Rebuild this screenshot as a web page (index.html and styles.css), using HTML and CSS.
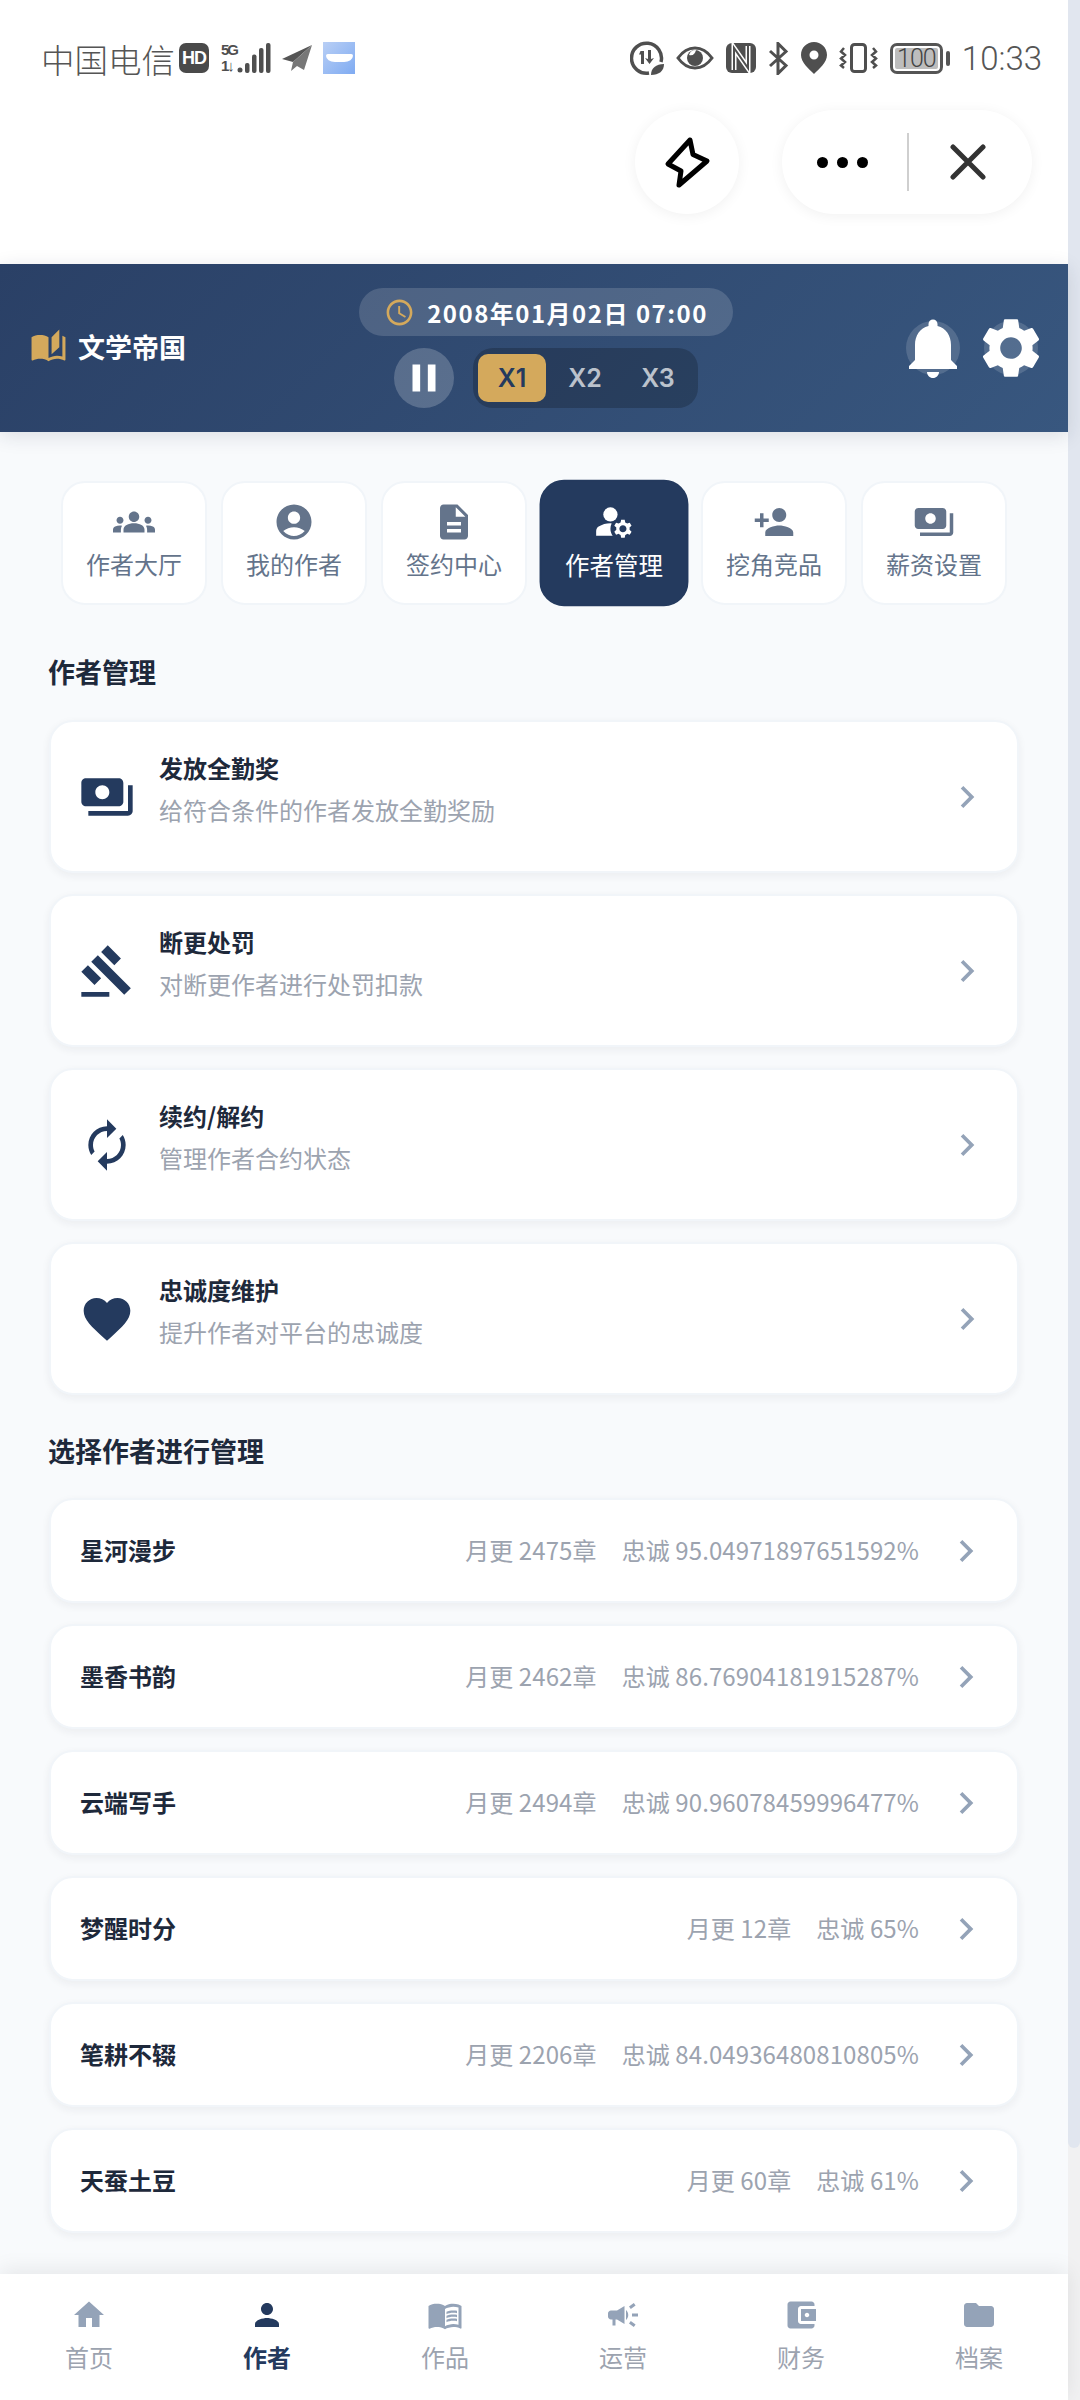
FILE: index.html
```html
<!DOCTYPE html>
<html lang="zh-CN">
  <head>
    <meta charset="UTF-8" />
    <meta name="viewport" content="width=device-width, initial-scale=1.0" />
    <title>文学帝国</title>
    <link rel="stylesheet" href="styles.css">
  </head>
  <body>
    <svg class="sprite" xmlns="http://www.w3.org/2000/svg">
      <symbol id="i-groups" viewBox="0 0 24 24"><path d="M12 12.75c1.63 0 3.07.39 4.24.9 1.08.48 1.76 1.56 1.76 2.73V18H6v-1.61c0-1.18.68-2.26 1.76-2.73 1.17-.52 2.61-.91 4.24-.91zM4 13c1.1 0 2-.9 2-2s-.9-2-2-2-2 .9-2 2 .9 2 2 2zm1.13 1.1c-.37-.06-.74-.1-1.13-.1-.99 0-1.93.21-2.78.58C.48 14.9 0 15.62 0 16.43V18h4.5v-1.61c0-.83.23-1.61.63-2.29zM20 13c1.1 0 2-.9 2-2s-.9-2-2-2-2 .9-2 2 .9 2 2 2zm4 3.43c0-.81-.48-1.53-1.22-1.85-.85-.37-1.79-.58-2.78-.58-.39 0-.76.04-1.13.1.4.68.63 1.46.63 2.29V18H24v-1.57zM12 6c1.66 0 3 1.34 3 3s-1.34 3-3 3-3-1.34-3-3 1.34-3 3-3z"/></symbol>
      <symbol id="i-account" viewBox="0 0 24 24"><path d="M12 2C6.48 2 2 6.48 2 12s4.48 10 10 10 10-4.48 10-10S17.52 2 12 2zm0 4c1.93 0 3.5 1.57 3.5 3.5S13.93 13 12 13s-3.5-1.57-3.5-3.5S10.07 6 12 6zm0 14c-2.03 0-4.43-.82-6.14-2.88C7.55 15.8 9.68 15 12 15s4.45.8 6.14 2.12C16.43 19.18 14.03 20 12 20z"/></symbol>
      <symbol id="i-doc" viewBox="0 0 24 24"><path d="M14 2H6c-1.1 0-1.99.9-1.99 2L4 20c0 1.1.89 2 1.99 2H18c1.1 0 2-.9 2-2V8l-6-6zm2 16H8v-2h8v2zm0-4H8v-2h8v2zm-3-5V3.5L18.5 9H13z"/></symbol>
      <symbol id="i-manage" viewBox="0 0 24 24"><circle cx="10" cy="8" r="4"/><path d="M10.67 13.02c-.22-.01-.44-.02-.67-.02-2.42 0-4.68.67-6.61 1.82-.88.52-1.39 1.5-1.39 2.53V20h9.26c-.79-1.13-1.26-2.51-1.26-4 0-1.07.25-2.07.67-2.98z"/><path d="M20.75 16c0-.22-.03-.42-.06-.63l1.14-1.01-1-1.73-1.45.49c-.32-.27-.68-.48-1.08-.63L18 11h-2l-.3 1.49c-.4.15-.76.36-1.08.63l-1.45-.49-1 1.73 1.14 1.01c-.03.21-.06.41-.06.63s.03.42.06.63l-1.14 1.01 1 1.73 1.45-.49c.32.27.68.48 1.08.63L16 21h2l.3-1.49c.4-.15.76-.36 1.08-.63l1.45.49 1-1.73-1.14-1.01c.03-.21.06-.41.06-.63zM17 18c-1.1 0-2-.9-2-2s.9-2 2-2 2 .9 2 2-.9 2-2 2z"/></symbol>
      <symbol id="i-personadd" viewBox="0 0 24 24"><path d="M15 12c2.21 0 4-1.79 4-4s-1.79-4-4-4-4 1.79-4 4 1.79 4 4 4zm-9-2V7H4v3H1v2h3v3h2v-3h3v-2H6zm9 4c-2.67 0-8 1.34-8 4v2h16v-2c0-2.66-5.33-4-8-4z"/></symbol>
      <symbol id="i-payments" viewBox="0 0 24 24"><path d="M19 14V6c0-1.1-.9-2-2-2H3c-1.1 0-2 .9-2 2v8c0 1.1.9 2 2 2h14c1.1 0 2-.9 2-2zm-9-1c-1.66 0-3-1.34-3-3s1.34-3 3-3 3 1.34 3 3-1.34 3-3 3zm13-6v11c0 1.1-.9 2-2 2H4v-2h17V7h2z"/></symbol>
      <symbol id="i-gavel" viewBox="0 0 24 24"><path d="M1 21h12v2H1v-2zM5.245 8.07l2.83-2.827 14.14 14.142-2.828 2.828L5.245 8.07zM12.317 1l5.657 5.656-2.83 2.83-5.654-5.66L12.317 1zM3.825 9.485l5.657 5.657-2.828 2.828-5.657-5.657 2.828-2.828z"/></symbol>
      <symbol id="i-renew" viewBox="0 0 24 24"><path d="M12 6v3l4-4-4-4v3c-4.42 0-8 3.58-8 8 0 1.57.46 3.03 1.24 4.26L6.7 14.8c-.45-.83-.7-1.79-.7-2.8 0-3.31 2.69-6 6-6zm6.76 1.74L17.3 9.2c.44.84.7 1.79.7 2.8 0 3.31-2.69 6-6 6v-3l-4 4 4 4v-3c4.42 0 8-3.58 8-8 0-1.57-.46-3.03-1.24-4.26z"/></symbol>
      <symbol id="i-heart" viewBox="0 0 24 24"><path d="M12 21.35l-1.45-1.32C5.4 15.36 2 12.28 2 8.5 2 5.42 4.42 3 7.5 3c1.74 0 3.41.81 4.5 2.09C13.09 3.81 14.76 3 16.5 3 19.58 3 22 5.42 22 8.5c0 3.78-3.4 6.86-8.55 11.54L12 21.35z"/></symbol>
      <symbol id="i-chevron" viewBox="0 0 24 24"><path d="M10 6L8.59 7.41 13.17 12l-4.58 4.59L10 18l6-6z"/></symbol>
      <symbol id="i-home" viewBox="0 0 24 24"><path d="M10 20v-6h4v6h5v-8h3L12 3 2 12h3v8z"/></symbol>
      <symbol id="i-person" viewBox="0 0 24 24"><path d="M12 12c2.21 0 4-1.79 4-4s-1.79-4-4-4-4 1.79-4 4 1.79 4 4 4zm0 2c-2.67 0-8 1.34-8 4v2h16v-2c0-2.66-5.33-4-8-4z"/></symbol>
      <symbol id="i-book" viewBox="0 0 24 24"><path d="M21 5c-1.11-.35-2.33-.5-3.5-.5-1.95 0-4.05.4-5.5 1.5-1.45-1.1-3.55-1.5-5.5-1.5S2.45 4.9 1 6v14.65c0 .25.25.5.5.5.1 0 .15-.05.25-.05C3.1 20.45 5.05 20 6.5 20c1.95 0 4.05.4 5.5 1.5 1.35-.85 3.8-1.5 5.5-1.5 1.65 0 3.35.3 4.75 1.05.1.05.15.05.25.05.25 0 .5-.25.5-.5V6c-.6-.45-1.25-.75-2-1zm0 13.5c-1.1-.35-2.3-.5-3.5-.5-1.7 0-4.15.65-5.5 1.5V8c1.35-.85 3.8-1.5 5.5-1.5 1.2 0 2.4.15 3.5.5v11.5z"/><path d="M17.5 10.5c.88 0 1.73.09 2.5.26V9.24c-.79-.15-1.64-.24-2.5-.24-1.7 0-3.24.29-4.5.83v1.66c1.13-.64 2.7-.99 4.5-.99zM13 12.49v1.66c1.13-.64 2.7-.99 4.5-.99.88 0 1.73.09 2.5.26V11.9c-.79-.15-1.64-.24-2.5-.24-1.7 0-3.24.3-4.5.83zM17.5 14.33c-1.7 0-3.24.29-4.5.83v1.66c1.13-.64 2.7-.99 4.5-.99.88 0 1.73.09 2.5.26v-1.52c-.79-.16-1.64-.24-2.5-.24z"/></symbol>
      <symbol id="i-campaign" viewBox="0 0 24 24"><path d="M18 11v2h4v-2h-4zm-2 6.61c.96.71 2.21 1.65 3.2 2.39.4-.53.8-1.07 1.2-1.6-.99-.74-2.24-1.68-3.2-2.4-.4.54-.8 1.08-1.2 1.61zM20.4 5.6c-.4-.53-.8-1.07-1.2-1.6-.99.74-2.24 1.68-3.2 2.4.4.53.8 1.07 1.2 1.6.96-.72 2.21-1.65 3.2-2.4zM4 9c-1.1 0-2 .9-2 2v2c0 1.1.9 2 2 2h1v4h2v-4h1l5 3V6L8 9H4zm11.5 3c0-1.33-.58-2.53-1.5-3.35v6.69c.92-.81 1.5-2.01 1.5-3.34z"/></symbol>
      <symbol id="i-wallet" viewBox="0 0 24 24"><path d="M21 18v1c0 1.1-.9 2-2 2H5c-1.11 0-2-.9-2-2V5c0-1.1.89-2 2-2h14c1.1 0 2 .9 2 2v1h-9c-1.11 0-2 .9-2 2v8c0 1.1.89 2 2 2h9zm-9-2h10V8H12v8zm4-2.5c-.83 0-1.5-.67-1.5-1.5s.67-1.5 1.5-1.5 1.5.67 1.5 1.5-.67 1.5-1.5 1.5z"/></symbol>
      <symbol id="i-folder" viewBox="0 0 24 24"><path d="M10 4H4c-1.1 0-1.99.9-1.99 2L2 18c0 1.1.9 2 2 2h16c1.1 0 2-.9 2-2V8c0-1.1-.9-2-2-2h-8l-2-2z"/></symbol>
    </svg>

    <div class="app">
      <div class="page">
        <!-- system status bar -->
        <div class="status">
          <div class="status-left">
            <span class="carrier">中国电信</span>
            <span class="hd">HD</span>
            <span class="net">
              <span class="net-text"><span>5G</span><span>1↓</span></span>
              <svg width="34" height="30" viewBox="0 0 34 30" fill="#4f4f4f"><circle cx="3" cy="27" r="2.500"/><rect x="8" y="20" width="4.500" height="10" rx="2"/><rect x="15" y="11.500" width="4.500" height="18.500" rx="2"/><rect x="22" y="5" width="4.500" height="25" rx="2"/><rect x="29" y="0" width="4.500" height="30" rx="2"/></svg>
            </span>
            <svg class="plane" width="30" height="28" viewBox="0 0 30 28"><path d="M0 15 30 1 11 18z" fill="#555"/><path d="M30 1 11 18l-2 9 6-5 7 4z" fill="#777"/></svg>
            <span class="app-icon"><span class="app-band"></span></span>
          </div>
          <div class="status-right">
            <svg width="34" height="34" viewBox="0 0 34 34"><path d="M31 21A15 15 0 1 0 19 32" fill="none" stroke="#4f4f4f" stroke-width="3.500"/><path d="M10.500 10h3.500v13h-3V13.500h-2zM18 9h3v9l3-1-4.500 6-4.500-6 3 1z" fill="#4f4f4f"/><path d="M21 34c0-7 5-11 13-11 0 7-5 11-13 11z" fill="#4f4f4f"/></svg>
            <svg width="38" height="24" viewBox="0 0 38 24"><path d="M2 12C7 5 12 2 19 2s12 3 17 10c-5 7-10 10-17 10S7 19 2 12z" fill="none" stroke="#4f4f4f" stroke-width="3"/><circle cx="19" cy="12" r="8" fill="#4f4f4f"/><path d="M13 9a7 7 0 0 1 7-5c-1 4-3 6-7 5z" fill="#fff"/></svg>
            <svg width="30" height="30" viewBox="0 0 30 30"><rect width="30" height="30" rx="6" fill="#4f4f4f"/><path d="M8 27V5l14 20V3" fill="none" stroke="#fff" stroke-width="5"/><path d="M8 27V5l14 20V3" fill="none" stroke="#4f4f4f" stroke-width="2"/></svg>
            <svg width="21" height="33" viewBox="0 0 21 33"><path d="M2 9l16 14.500-8 8V1.500l8 8L2 24" fill="none" stroke="#4f4f4f" stroke-width="3"/></svg>
            <svg width="26" height="32" viewBox="0 0 26 32"><path fill-rule="evenodd" d="M13 0C6 0 0 5.500 0 13c0 7.500 8 14 13 19 5-5 13-11.500 13-19C26 5.500 20 0 13 0zm0 8.500a4.500 4.500 0 1 1 0 9 4.500 4.500 0 0 1 0-9z" fill="#4f4f4f"/></svg>
            <svg width="39" height="30" viewBox="0 0 39 30"><rect x="12.500" y="1.500" width="14" height="27" rx="3" fill="none" stroke="#4f4f4f" stroke-width="3"/><path d="M5 5 2 8.500l4 3.500-4 3.500 4 3.500-4 3.500 3 2.500M34 5l3 3.500-4 3.500 4 3.500-4 3.500 4 3.500-3 2.500" fill="none" stroke="#4f4f4f" stroke-width="2.500"/></svg>
            <span class="battery"><span class="battery-body">100</span><span class="battery-tip"></span></span>
            <span class="clock">10:33</span>
          </div>
        </div>

        <!-- mini program capsule -->
        <div class="capsule-row">
          <div class="round-btn">
            <svg width="48" height="54" viewBox="0 0 48 54"><path d="M27 5 5 29l13 7-2 14 28-24-14-6.500z" fill="none" stroke="#000" stroke-width="5" stroke-linejoin="round"/></svg>
          </div>
          <div class="capsule">
            <div class="dots"><i></i><i></i><i></i></div>
            <div class="capsule-line"></div>
            <svg class="capsule-close" width="36" height="36" viewBox="0 0 36 36"><path d="M3 3l30 30M33 3 3 33" stroke="#333" stroke-width="5" stroke-linecap="round"/></svg>
          </div>
        </div>

        <header class="topbar">
          <div class="brand">
            <svg class="brand-icon" viewBox="0 0 24 24"><path d="M19 1l-5 5v11l5-4.500V1zM1 6v14.650c0 .25.25.5.5.5.1 0 .15-.05.25-.05C3.100 20.450 5.050 20 6.500 20c1.950 0 4.050.4 5.500 1.500V6c-1.450-1.100-3.550-1.500-5.500-1.500S2.450 4.900 1 6zm22 13.500V6c-.6-.45-1.250-.8-2-1.050v13.500c-1.100-.35-2.300-.5-3.500-.5-1.700 0-4.150.65-5.500 1.500v2.050c1.350-.85 3.800-1.500 5.500-1.500 1.650 0 3.350.3 4.750 1.050.1.050.15.050.25.050.25 0 .5-.25.5-.5v-1.050z"/></svg>
            <span>文学帝国</span>
          </div>
          <div class="sim">
            <div class="sim-time">
              <svg class="sim-clock" viewBox="0 0 24 24"><path d="M11.990 2C6.470 2 2 6.480 2 12s4.470 10 9.990 10C17.520 22 22 17.520 22 12S17.520 2 11.990 2zM12 20c-4.420 0-8-3.580-8-8s3.580-8 8-8 8 3.580 8 8-3.580 8-8 8zm.5-13H11v6l5.250 3.150.75-1.230-4.500-2.670z"/></svg>
              <span>2008年01月02日 07:00</span>
            </div>
            <div class="sim-controls">
              <div class="pause">
                <svg viewBox="0 0 24 24"><path d="M6 19h4V5H6v14zm8-14v14h4V5h-4z"/></svg>
              </div>
              <div class="speeds">
                <span class="speed speed-on">X1</span>
                <span class="speed">X2</span>
                <span class="speed">X3</span>
              </div>
            </div>
          </div>
          <div class="top-actions">
            <div class="top-btn">
              <svg viewBox="0 0 24 24"><path d="M12 22c1.100 0 2-.9 2-2h-4c0 1.100.89 2 2 2zm6-6v-5c0-3.070-1.640-5.640-4.500-6.320V4c0-.83-.67-1.500-1.500-1.500s-1.500.67-1.500 1.500v.68C7.630 5.360 6 7.920 6 11v5l-2 2v1h16v-1l-2-2z"/></svg>
            </div>
            <div class="top-btn">
              <svg viewBox="0 0 24 24"><path d="M19.140 12.940c.04-.3.06-.61.06-.94 0-.32-.02-.64-.07-.94l2.030-1.580c.18-.14.23-.41.12-.61l-1.920-3.320c-.12-.22-.37-.29-.59-.22l-2.390.96c-.5-.38-1.030-.7-1.620-.94l-.36-2.540c-.04-.24-.24-.41-.48-.41h-3.840c-.24 0-.43.17-.47.41l-.36 2.540c-.59.24-1.130.57-1.620.94l-2.390-.96c-.22-.08-.47 0-.59.22L2.740 8.870c-.12.21-.08.47.12.61l2.030 1.580c-.05.3-.09.63-.09.94s.02.64.07.94l-2.030 1.580c-.18.14-.23.41-.12.61l1.920 3.320c.12.22.37.29.59.22l2.390-.96c.5.38 1.030.7 1.620.94l.36 2.540c.05.24.24.41.48.41h3.840c.24 0 .44-.17.47-.41l.36-2.540c.59-.24 1.130-.56 1.620-.94l2.390.96c.22.08.47 0 .59-.22l1.920-3.320c.12-.22.07-.47-.12-.61l-2.010-1.580zM12 15.600c-1.980 0-3.600-1.620-3.600-3.600s1.620-3.600 3.600-3.600 3.600 1.620 3.600 3.600-1.620 3.600-3.600 3.600z"/></svg>
            </div>
          </div>
        </header>

        <main class="content">
          <nav class="tabs">
            <div class="tab"><svg class="tab-icon"><use href="#i-groups"/></svg><span>作者大厅</span></div>
            <div class="tab"><svg class="tab-icon"><use href="#i-account"/></svg><span>我的作者</span></div>
            <div class="tab"><svg class="tab-icon"><use href="#i-doc"/></svg><span>签约中心</span></div>
            <div class="tab tab-on"><svg class="tab-icon"><use href="#i-manage"/></svg><span>作者管理</span></div>
            <div class="tab"><svg class="tab-icon"><use href="#i-personadd"/></svg><span>挖角竞品</span></div>
            <div class="tab"><svg class="tab-icon"><use href="#i-payments"/></svg><span>薪资设置</span></div>
          </nav>

          <h2 class="section-title">作者管理</h2>
          <div class="actions">
            <div class="action">
              <svg class="action-icon"><use href="#i-payments"/></svg>
              <div class="action-text"><div class="action-name">发放全勤奖</div><div class="action-desc">给符合条件的作者发放全勤奖励</div></div>
              <svg class="chevron"><use href="#i-chevron"/></svg>
            </div>
            <div class="action">
              <svg class="action-icon"><use href="#i-gavel"/></svg>
              <div class="action-text"><div class="action-name">断更处罚</div><div class="action-desc">对断更作者进行处罚扣款</div></div>
              <svg class="chevron"><use href="#i-chevron"/></svg>
            </div>
            <div class="action">
              <svg class="action-icon"><use href="#i-renew"/></svg>
              <div class="action-text"><div class="action-name">续约/解约</div><div class="action-desc">管理作者合约状态</div></div>
              <svg class="chevron"><use href="#i-chevron"/></svg>
            </div>
            <div class="action">
              <svg class="action-icon"><use href="#i-heart"/></svg>
              <div class="action-text"><div class="action-name">忠诚度维护</div><div class="action-desc">提升作者对平台的忠诚度</div></div>
              <svg class="chevron"><use href="#i-chevron"/></svg>
            </div>
          </div>

          <h2 class="section-title section-second">选择作者进行管理</h2>
          <div class="authors">
            <div class="author"><span class="author-name">星河漫步</span><span class="author-meta">月更 2475章</span><span class="author-meta">忠诚 95.04971897651592%</span><svg class="chevron"><use href="#i-chevron"/></svg></div>
            <div class="author"><span class="author-name">墨香书韵</span><span class="author-meta">月更 2462章</span><span class="author-meta">忠诚 86.76904181915287%</span><svg class="chevron"><use href="#i-chevron"/></svg></div>
            <div class="author"><span class="author-name">云端写手</span><span class="author-meta">月更 2494章</span><span class="author-meta">忠诚 90.96078459996477%</span><svg class="chevron"><use href="#i-chevron"/></svg></div>
            <div class="author"><span class="author-name">梦醒时分</span><span class="author-meta">月更 12章</span><span class="author-meta">忠诚 65%</span><svg class="chevron"><use href="#i-chevron"/></svg></div>
            <div class="author"><span class="author-name">笔耕不辍</span><span class="author-meta">月更 2206章</span><span class="author-meta">忠诚 84.04936480810805%</span><svg class="chevron"><use href="#i-chevron"/></svg></div>
            <div class="author"><span class="author-name">天蚕土豆</span><span class="author-meta">月更 60章</span><span class="author-meta">忠诚 61%</span><svg class="chevron"><use href="#i-chevron"/></svg></div>
          </div>
        </main>

        <footer class="bottom-nav">
          <div class="nav-item"><svg class="nav-icon"><use href="#i-home"/></svg><span>首页</span></div>
          <div class="nav-item nav-on"><svg class="nav-icon"><use href="#i-person"/></svg><span>作者</span></div>
          <div class="nav-item"><svg class="nav-icon"><use href="#i-book"/></svg><span>作品</span></div>
          <div class="nav-item"><svg class="nav-icon"><use href="#i-campaign"/></svg><span>运营</span></div>
          <div class="nav-item"><svg class="nav-icon"><use href="#i-wallet"/></svg><span>财务</span></div>
          <div class="nav-item"><svg class="nav-icon"><use href="#i-folder"/></svg><span>档案</span></div>
        </footer>
      </div>

      <div class="scrollbar"><div class="scrollbar-thumb"></div></div>
    </div>
  </body>
</html>
```

FILE: styles.css
```css
* {
  margin: 0;
  padding: 0;
  box-sizing: border-box;
}

body {
  font-family: "Noto Sans CJK SC", "Noto Sans", sans-serif;
  background-color: #ffffff;
  color: #1e293b;
}

.sprite {
  display: none;
}

.app {
  display: flex;
  width: 1080px;
  height: 2400px;
  overflow: hidden;
}

.page {
  flex: 1;
  min-width: 0;
  display: flex;
  flex-direction: column;
  background-color: #f8fafc;
}

.scrollbar {
  width: 12px;
  background-color: #f1f1f2;
}

.scrollbar-thumb {
  height: 2148px;
  background-color: #e1e6ef;
  border-radius: 0 0 6px 6px;
}

/* status bar */
.status {
  height: 110px;
  background-color: #ffffff;
  padding: 6px 26px 0 41px;
  display: flex;
  justify-content: space-between;
  align-items: center;
}

.status-left,
.status-right {
  display: flex;
  align-items: center;
}

.carrier {
  font-size: 33.500px;
  font-weight: 300;
  color: #555555;
  width: 138px;
}

.hd {
  width: 30px;
  height: 30px;
  border-radius: 7px;
  background-color: #4a4a4a;
  color: #ffffff;
  font-family: "Liberation Sans", sans-serif;
  font-size: 18px;
  font-weight: 700;
  line-height: 30px;
  text-align: center;
  letter-spacing: -1px;
}

.net {
  display: flex;
  align-items: center;
  margin-left: 12px;
}

.net-text {
  display: flex;
  flex-direction: column;
  font-family: "Liberation Sans", sans-serif;
  font-size: 15px;
  font-weight: 700;
  line-height: 16px;
  letter-spacing: -2px;
  color: #4f4f4f;
  width: 16px;
}

.plane {
  margin-left: 11px;
}

.app-icon {
  width: 32px;
  height: 32px;
  margin-left: 11px;
  background: linear-gradient(135deg, #b9cff5, #7fabf2);
  display: flex;
  align-items: center;
  justify-content: center;
}

.app-band {
  width: 27px;
  height: 8px;
  background-color: #ffffff;
  border-radius: 2px 2px 10px 10px / 2px 2px 7px 7px;
}

.status-right {
  gap: 12px;
}

.battery {
  display: flex;
  align-items: center;
}

.battery-body {
  width: 53px;
  height: 31px;
  border: 3px solid #555555;
  border-radius: 7px;
  background: linear-gradient(#bdbdbd, #bdbdbd) content-box;
  padding: 2px;
  font-family: Roboto, sans-serif;
  font-size: 25px;
  font-weight: 300;
  line-height: 21px;
  letter-spacing: -1px;
  text-align: center;
  color: #444444;
}

.battery-tip {
  width: 4px;
  height: 15px;
  margin-left: 3px;
  background-color: #555555;
  border-radius: 2px;
}

.clock {
  font-family: Roboto, sans-serif;
  font-size: 33px;
  font-weight: 300;
  color: #555555;
}

/* capsule */
.capsule-row {
  height: 154px;
  background-color: #ffffff;
  display: flex;
  justify-content: flex-end;
  gap: 43px;
  padding-right: 36px;
}

.round-btn {
  width: 104px;
  height: 104px;
  border-radius: 50%;
  background-color: #ffffff;
  box-shadow: 0 2px 14px rgba(0, 0, 0, 0.06);
  display: flex;
  align-items: center;
  justify-content: center;
}

.capsule {
  width: 250px;
  height: 104px;
  border-radius: 52px;
  background-color: #ffffff;
  box-shadow: 0 2px 14px rgba(0, 0, 0, 0.06);
  display: flex;
  align-items: center;
  padding-left: 35px;
}

.dots {
  display: flex;
  gap: 9px;
}

.dots i {
  width: 11px;
  height: 11px;
  border-radius: 50%;
  background-color: #000000;
}

.capsule-line {
  width: 2px;
  height: 58px;
  margin-left: 39px;
  background-color: #cfcfcf;
}

.capsule-close {
  margin-left: 41px;
}

/* top bar */
.topbar {
  height: 168px;
  padding: 0 30px;
  display: flex;
  align-items: center;
  justify-content: space-between;
  background: linear-gradient(135deg, #2a4066, #38577f);
  box-shadow: 0 4px 18px rgba(30, 41, 59, 0.13);
  position: relative;
}

.brand {
  display: flex;
  align-items: center;
  gap: 11px;
  font-size: 27px;
  font-weight: 700;
  color: #ffffff;
  padding-bottom: 3px;
}

.brand-icon {
  width: 37px;
  height: 37px;
  fill: #d4a95c;
}

.sim {
  display: flex;
  flex-direction: column;
  align-items: center;
  gap: 12px;
}

.sim-time {
  height: 48px;
  width: 374px;
  border-radius: 24px;
  background-color: rgba(255, 255, 255, 0.15);
  display: flex;
  align-items: center;
  justify-content: center;
  gap: 12px;
  color: #ffffff;
  font-size: 24px;
  font-weight: 700;
  letter-spacing: 1.500px;
}

.sim-clock {
  width: 31px;
  height: 31px;
  fill: #d4a95c;
}

.sim-controls {
  display: flex;
  align-items: center;
  gap: 19px;
}

.pause {
  width: 60px;
  height: 60px;
  border-radius: 50%;
  background-color: rgba(255, 255, 255, 0.2);
  display: flex;
  align-items: center;
  justify-content: center;
}

.pause svg {
  width: 46px;
  height: 46px;
  fill: #ffffff;
}

.speeds {
  width: 225px;
  height: 60px;
  border-radius: 20px;
  background-color: rgba(0, 0, 0, 0.2);
  display: flex;
  align-items: center;
  padding: 0 5px;
  gap: 5px;
}

.speed {
  width: 68px;
  height: 48px;
  border-radius: 10px;
  line-height: 48px;
  text-align: center;
  font-family: Inter, sans-serif;
  font-size: 25px;
  font-weight: 600;
  color: rgba(255, 255, 255, 0.7);
}

.speed-on {
  background-color: #d4a95c;
  color: #243a5e;
}

.top-actions {
  display: flex;
  gap: 24px;
}

.top-btn {
  width: 54px;
  height: 54px;
  border-radius: 50%;
  background-color: rgba(255, 255, 255, 0.15);
  display: flex;
  align-items: center;
  justify-content: center;
}

.top-btn svg {
  flex: none;
  width: 72px;
  height: 72px;
  fill: #ffffff;
}

/* content */
.content {
  flex: 1;
  min-height: 0;
  overflow: hidden;
  padding: 49px 49px 0;
}

.tabs {
  display: flex;
  justify-content: center;
  gap: 14px;
  margin: 0 -49px;
}

.tab {
  width: 146px;
  height: 124px;
  border: 2px solid #f1f5f9;
  border-radius: 24px;
  background-color: #ffffff;
  display: flex;
  flex-direction: column;
  align-items: center;
  justify-content: center;
  gap: 4px;
  font-size: 24px;
  line-height: 34px;
  color: #64748b;
  padding-bottom: 4px;
}

.tab-icon {
  width: 42px;
  height: 42px;
  fill: #64748b;
}

.tab-on {
  background-color: #243a5e;
  border-color: #243a5e;
  color: #ffffff;
  transform: scale(1.02);
}

.tab-on .tab-icon {
  fill: #ffffff;
}

.section-title {
  font-size: 27px;
  font-weight: 700;
  line-height: 36px;
  color: #1e293b;
  margin: 49px 0 30px -1px;
}

.section-second {
  margin: 38px 0 29px -1px;
}

.actions {
  display: flex;
  flex-direction: column;
  gap: 21px;
}

.action {
  height: 153px;
  border: 2px solid #f1f5f9;
  border-radius: 24px;
  background-color: #ffffff;
  box-shadow: 0 3px 8px rgba(30, 41, 59, 0.06);
  padding: 0 28px;
  display: flex;
  align-items: center;
}

.action-icon {
  flex: none;
  width: 56px;
  height: 56px;
  fill: #243a5e;
  margin-right: 24px;
}

.action-text {
  flex: 1;
  padding-bottom: 16px;
}

.action-name {
  font-size: 24px;
  font-weight: 700;
  line-height: 34px;
  margin-bottom: 8px;
}

.action-desc {
  font-size: 24px;
  line-height: 34px;
  color: #9ca3af;
}

.chevron {
  flex: none;
  width: 44px;
  height: 44px;
  fill: #94a3b8;
}

.authors {
  display: flex;
  flex-direction: column;
  gap: 21px;
}

.author {
  height: 105px;
  border: 2px solid #f1f5f9;
  border-radius: 24px;
  background-color: #ffffff;
  box-shadow: 0 3px 8px rgba(30, 41, 59, 0.06);
  padding: 0 29px 0 29px;
  display: flex;
  align-items: center;
  gap: 25px;
  font-size: 24px;
}

.author-name {
  flex: 1;
  font-weight: 700;
  padding-bottom: 3px;
}

.author-meta {
  color: #9ca3af;
  padding-bottom: 2px;
  letter-spacing: 0.100px;
}

/* bottom nav */
.bottom-nav {
  height: 126px;
  background-color: #ffffff;
  box-shadow: 0 -4px 20px rgba(0, 0, 0, 0.08);
  display: grid;
  grid-template-columns: repeat(6, 1fr);
  position: relative;
}

.nav-item {
  display: flex;
  flex-direction: column;
  align-items: center;
  padding-top: 23px;
  font-size: 24px;
  line-height: 32px;
  color: #9ca3af;
}

.nav-icon {
  width: 36px;
  height: 36px;
  fill: #94a3b8;
  margin-bottom: 8px;
}

.nav-on {
  color: #243a5e;
  font-weight: 700;
}

.nav-on .nav-icon {
  fill: #243a5e;
}
```
